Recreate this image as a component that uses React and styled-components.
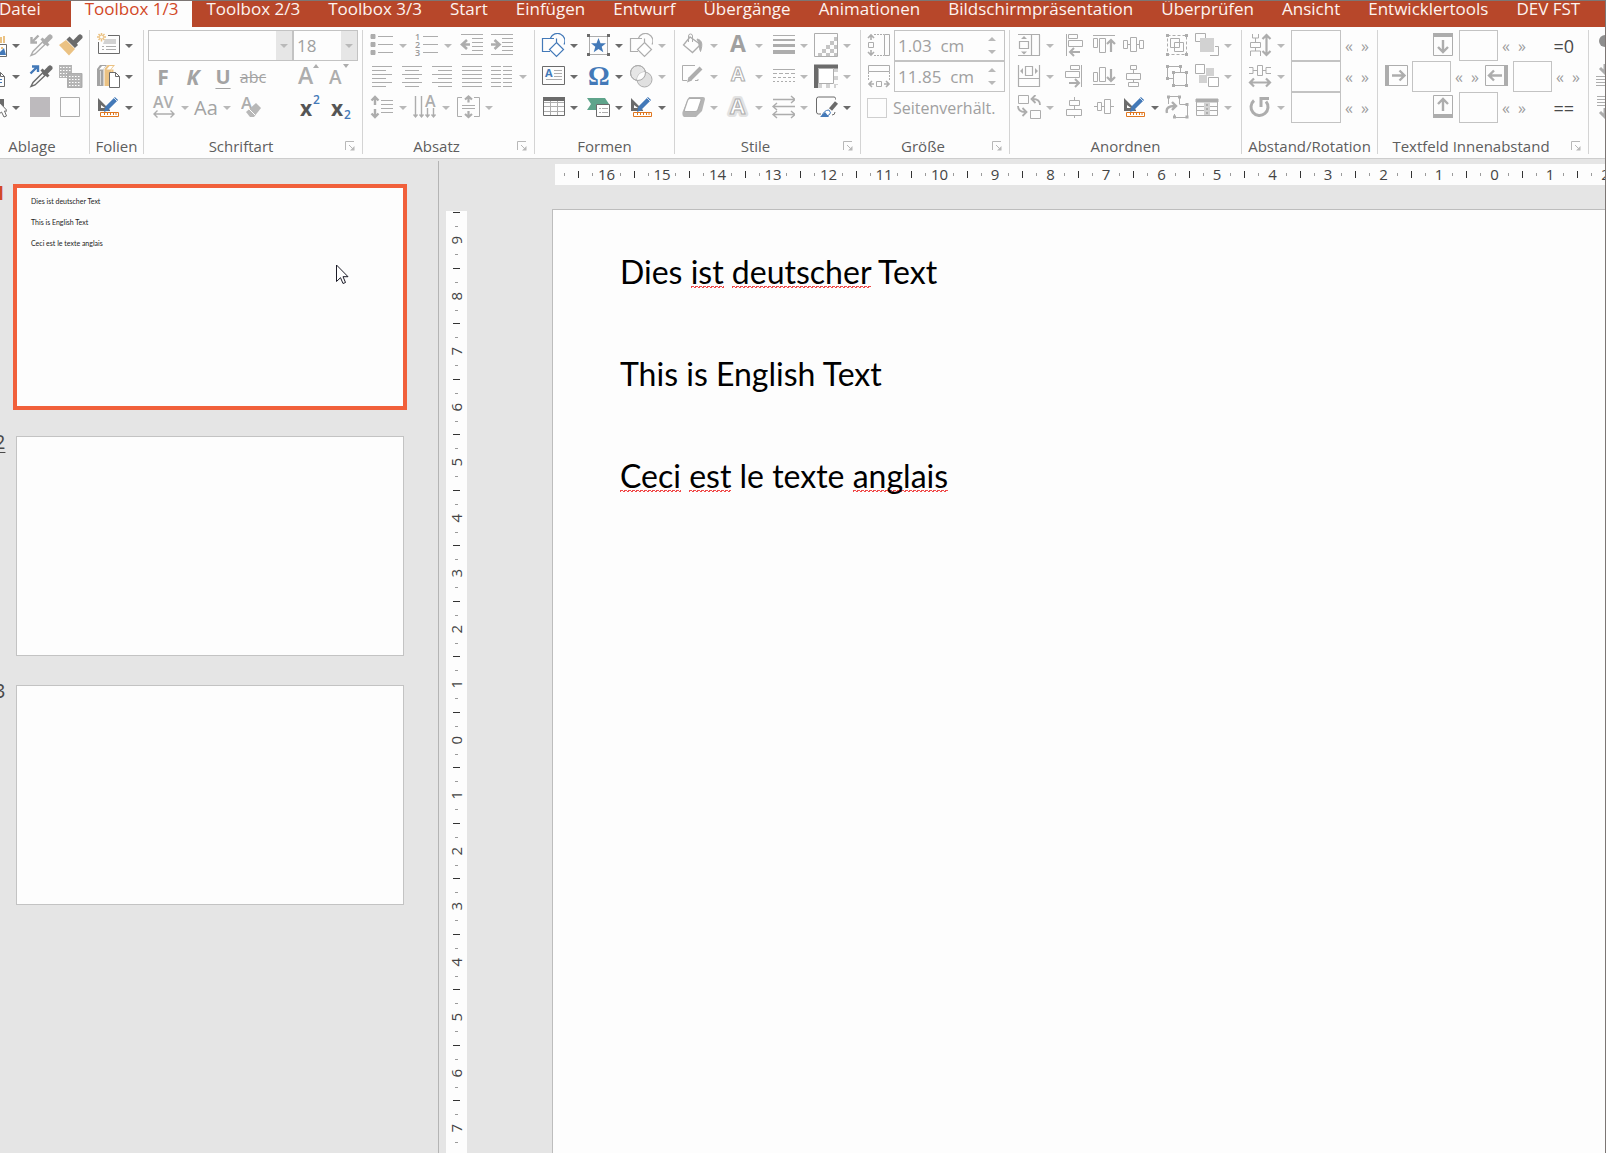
import React from "react";
import styled, { createGlobalStyle, css } from "styled-components";

const G = "#adadad";
const L = "#d2d2d2";
const D = "#6b6b6b";
const B = "#4379b8";
const O = "#e0771f";
const T = "#ebc283";
const UI = '"Open Sans", "Noto Sans", sans-serif';

const GlobalStyle = createGlobalStyle`
  *, *::before, *::after { box-sizing: border-box; }
  body { margin: 0; background: #e5e5e5; font-family: ${UI}; }
  button, input, select { font: inherit; margin: 0; }
  h1, h2, p, ol { margin: 0; padding: 0; font-weight: 400; }
`;

const Frame = styled.div`
  display: flex;
  flex-direction: column;
  height: 100vh;
  overflow: hidden;
  border-top: 1px solid #7c7674;
  border-right: 1px solid #7c7674;
  background: #e5e5e5;
`;

/* ---------- tabs ---------- */

const TabBar = styled.nav`
  display: flex;
  flex: none;
  height: 26px;
  overflow: hidden;
  background: #b7472a;
`;

const Tab = styled.a`
  flex: none;
  padding: 0 14px;
  line-height: 16px;
  font-size: 17px;
  white-space: nowrap;
  text-decoration: none;
  color: ${(p) => (p.$active ? "#d24726" : "#fdf3f0")};
  background: ${(p) => (p.$active ? "#fdfdfd" : "transparent")};
  &:first-child {
    margin-left: -15px;
    padding-right: 30px;
  }
`;

/* ---------- ribbon ---------- */

const Ribbon = styled.div`
  display: flex;
  flex: none;
  height: 132px;
  padding-top: 3px;
  overflow: hidden;
  background: #fdfdfd;
  border-bottom: 1px solid #cdcdcd;
`;

const Group = styled.section`
  display: flex;
  flex-direction: column;
  flex: none;
  width: ${(p) => p.$width}px;
  height: 124px;
  padding-left: ${(p) => p.$inset || 6}px;
  border-right: 1px solid #d4d4d4;
  &:first-child {
    margin-left: -27px;
  }
`;

const Row = styled.div`
  display: grid;
  grid-template-columns: ${(p) => p.$cols};
  align-items: center;
  height: 31px;
  margin-left: ${(p) => p.$indent || 0}px;
`;

const GroupFooter = styled.footer`
  display: flex;
  align-items: center;
  height: 16px;
  margin-top: 15px;
  margin-left: -${(p) => p.$inset || 6}px;
`;

const GroupTitle = styled.h2`
  flex: 1;
  text-align: center;
  white-space: nowrap;
  font-size: 15px;
  line-height: 16px;
  color: #5e5e5e;
`;

const Launcher = styled.button`
  width: 24px;
  height: 10px;
  padding: 0 0 0 7px;
  border: 0;
  background: none;
  display: flex;
`;

const ToolButton = styled.button`
  display: flex;
  align-items: center;
  gap: 5px;
  height: 31px;
  padding: 0;
  border: 0;
  background: none;
  color: ${G};
`;

const Glyph = styled.span`
  width: ${(p) => p.$width || 30}px;
  text-align: center;
  font-size: ${(p) => p.$size || 21}px;
  line-height: 24px;
  font-weight: ${(p) => (p.$bold ? 700 : 400)};
  font-style: ${(p) => (p.$italic ? "italic" : "normal")};
  text-decoration: ${(p) => p.$line || "none"};
  text-decoration-thickness: 1px;
  text-underline-offset: 4px;
  color: ${(p) => p.$color || "#a3a3a3"};
`;

const Script = styled.span`
  align-self: ${(p) => (p.$low ? "flex-end" : "flex-start")};
  font-size: 12px;
  line-height: 16px;
  font-weight: 600;
  color: ${B};
`;

const ScriptButton = styled(ToolButton)`
  gap: 1px;
`;

const Combo = styled.div`
  display: grid;
  grid-template-columns: 1fr 16px;
  height: 31px;
  border: 1px solid #c3c3c3;
  select {
    grid-area: 1 / 1 / 2 / 3;
    width: 100%;
    height: 29px;
    padding: 0 3px;
    appearance: none;
    border: 0;
    border-radius: 0;
    background: #fdfdfd;
    font-size: 17px;
    color: #a0a0a0;
    opacity: 1;
  }
  span {
    grid-area: 1 / 2;
    z-index: 1;
    display: grid;
    place-items: center;
    background: #e6e6e6;
  }
`;

const Field = styled.input`
  width: 100%;
  min-width: 0;
  height: 31px;
  padding: 0 4px;
  border: 1px solid #c3c3c3;
  background: #fdfdfd;
  font-size: 17px;
  color: #a0a0a0;
`;

const SpinBox = styled.div`
  display: flex;
  align-items: center;
  height: 31px;
  border: 1px solid #c3c3c3;
  input {
    flex: 1;
    min-width: 0;
    padding: 0 0 0 3px;
    border: 0;
    background: none;
    font-size: 17px;
    color: #a0a0a0;
    white-space: pre;
  }
`;

const SpinButtons = styled.div`
  display: flex;
  flex-direction: column;
  width: 24px;
  button {
    display: grid;
    place-items: center;
    height: 13px;
    padding: 0;
    border: 0;
    background: none;
  }
`;

const CheckLabel = styled.label`
  display: flex;
  align-items: center;
  gap: 6px;
  font-size: 16px;
  white-space: nowrap;
  color: #a0a0a0;
  input {
    width: 20px;
    height: 20px;
    margin: 0;
    appearance: none;
    border: 1px solid #cfcfcf;
  }
`;

const Step = styled.button`
  width: 16px;
  padding: 0;
  border: 0;
  background: none;
  font-size: 16px;
  line-height: 24px;
  color: #9d9d9d;
`;

const Preset = styled.button`
  padding: 0;
  border: 0;
  background: none;
  font-size: 18px;
  line-height: 24px;
  text-align: right;
  color: #4a4a4a;
`;

/* ---------- workspace ---------- */

const Workspace = styled.div`
  display: flex;
  flex: 1;
  min-height: 0;
  padding-top: 2px;
`;

const Sidebar = styled.aside`
  flex: none;
  width: 439px;
  overflow: hidden;
  padding: 26px 34px 0 0;
  border-right: 1px solid #b4b4b4;
`;

const SlideList = styled.ol`
  display: flex;
  flex-direction: column;
  gap: 29px;
  margin-left: -6px;
  list-style: none;
`;

const SlideItem = styled.li`
  display: flex;
  gap: 11px;
`;

const SlideNumber = styled.span`
  width: 11px;
  margin-top: -2px;
  font-size: 20px;
  line-height: 15px;
  color: ${(p) => (p.$active ? "#d24726" : "#4a4a4a")};
  font-weight: ${(p) => (p.$active ? 700 : 400)};
  text-decoration: ${(p) => (p.$animated ? "underline" : "none")};
  text-decoration-thickness: 1px;
  text-underline-offset: 3px;
`;

const Thumb = styled.div`
  position: relative;
  flex: 1;
  height: 220px;
  padding: 3px 14px;
  border: 1px solid #c3c3c3;
  background: #fdfdfd;
  font-family: Lato, sans-serif;
  font-size: 7px;
  line-height: 21px;
  color: #222;
  ${(p) =>
    p.$active &&
    css`
      border-color: #f1603b;
      box-shadow: 0 0 0 3px #f1603b;
    `}
`;

const Pointer = styled.svg`
  position: absolute;
  left: 319px;
  top: 76px;
`;

const Pane = styled.main`
  flex: 1;
  min-width: 0;
  display: grid;
  grid-template-columns: 21px 1fr;
  grid-template-rows: 21px 1fr;
  gap: 24px 85px;
  padding: 3px 0 0 7px;
  overflow: hidden;
`;

const RulerH = styled.div`
  grid-column: 2;
  display: flex;
  margin-left: 3px;
  padding-left: 3px;
  overflow: hidden;
  background: #fdfdfd;
`;

const RulerV = styled.div`
  display: flex;
  flex-direction: column;
  justify-content: flex-start;
  min-height: 0;
  margin-top: 2px;
  overflow: hidden;
  background: #fdfdfd;
  & > :first-child {
    margin-top: -5px;
  }
`;

/* Two centimetres of ruler, eight equal slots */
const Span = styled.div`
  flex: none;
  display: flex;
  flex-direction: ${(p) => (p.$vertical ? "column" : "row")};
  ${(p) => (p.$vertical ? "height" : "width")}: 111px;
`;

const Slot = styled.span`
  flex: 1 1 0;
  min-width: 0;
  min-height: 0;
  display: flex;
  align-items: center;
  justify-content: center;
  font-size: 15px;
  line-height: 20px;
  color: #444;
  b {
    font-weight: 400;
    writing-mode: ${(p) => (p.$vertical ? "vertical-rl" : "horizontal-tb")};
    rotate: ${(p) => (p.$vertical ? "180deg" : "none")};
    margin: ${(p) => (p.$vertical ? "0 2px 0 0" : "0 0 2px")};
  }
`;

const Tick = styled.i`
  flex: none;
  ${(p) => {
    const size = p.$major ? 7 : 3;
    return p.$vertical
      ? `width: ${size}px; height: 1px;`
      : `width: 1px; height: ${size}px;`;
  }}
  background: ${(p) => (p.$major ? "#333" : "#9b9b9b")};
`;

const Slide = styled.article`
  grid-area: 2 / 2;
  display: flex;
  flex-direction: column;
  gap: 51px;
  padding: 36px 0 0 67px;
  border: solid #bdbdbd;
  border-width: 1px 0 0 1px;
  background: #fdfdfd;
  font-family: Lato, sans-serif;
  font-size: 32px;
  line-height: 51px;
  color: #000;
`;

const Misspelled = styled.span`
  padding-bottom: 1px;
  background-image: linear-gradient(45deg, transparent 60%, #f04a4a 60% 85%, transparent 85%),
    linear-gradient(135deg, transparent 10%, #f04a4a 10% 35%, transparent 35%);
  background-size: 4px 3px;
  background-repeat: repeat-x;
  background-position: 0 34px;
`;

/* ---------- icons ---------- */

const Svg = ({ children, c = G, fill = "none", ...rest }) => (
  <svg width="24" height="25" viewBox="0 0 24 25" fill={fill} stroke={c} aria-hidden="true" {...rest}>
    {children}
  </svg>
);

const Caret = ({ on, up }) => (
  <svg width="8" height="4" viewBox="0 0 8 4" aria-hidden="true">
    <path d={up ? "M0 4h8L4 0z" : "M0 0h8L4 4z"} fill={on ? D : "#b9b9b9"} />
  </svg>
);

const ArrowHead = ({ d, c = G }) => <path d={d} fill="none" stroke={c} strokeWidth="2.4" />;

const Rules = ({ ys, x1, x2 }) => <path d={ys.map((y) => `M${x1} ${y}H${x2}`).join("")} />;

const Pipette = ({ c }) => (
  <>
    <path d="M14 8.500 4 18.500l-2 4 4-1.500L16.500 11" stroke={c} strokeWidth="1.400" />
    <path d="M12.500 5.500l7 7" stroke={c} strokeWidth="3" />
    <path d="M16 9l5-5" stroke={c} strokeWidth="5" strokeLinecap="round" />
  </>
);

const Shapes = ({ c, fill = "none" }) => (
  <Svg c={c} strokeWidth="1.200">
    <path d="M9 18.500H1.500v-13H13" />
    <path d="M9.500 5A7.500 7.500 0 1 1 23 11.500M15.500 5.500V9" />
    <path d="M15.500 9.500l7 7-7 7-7-7z" fill={fill} />
  </Svg>
);

const Lines = ({ rows }) => (
  <Svg shapeRendering="crispEdges">
    {rows.map(([a, b], i) => (
      <path key={i} d={`M${a} ${2.5 + i * 4}H${b}`} strokeWidth="1" />
    ))}
  </Svg>
);

const Handles = ({ pts, c = G }) => (
  <path d={pts.map(([x, y]) => `M${x - 1.5} ${y - 1.5}h3v3h-3z`).join("")} fill={c} stroke="none" />
);

const I = {
  paste: (
    <Svg>
      <path d="M2 4h4v18H2zM17 4h2v6h-2zM20 3h2v7h-2z" fill={T} stroke="none" />
      <path d="M8.500 11.500h15v12h-15z" fill="#fff" stroke={D} />
      <path d="M10 22l5-5 2 2 4-4 2 7z" fill={B} stroke="none" />
      <path d="M18 14h2v2h-2z" fill={T} stroke="none" />
    </Svg>
  ),
  page: (
    <Svg c={D}>
      <path d="M8 8.500h9.500l4 4v10H8M17.500 8.500v4h4" />
      <path d="M10 15.500h9M10 18.500h9" stroke={B} />
    </Svg>
  ),
  select: (
    <Svg c={D}>
      <path d="M10 4h11v8z" fill={D} stroke="none" />
      <path d="M15.500 6.500v13l3-2.500 2.500 5 2.500-1-2-5h3z" fill="#fff" />
    </Svg>
  ),
  pipetteOff: (
    <Svg>
      <Pipette c={G} />
      <path d="M9.500 2.500l-7 7M2.500 4v5.500H8" strokeWidth="2.400" />
    </Svg>
  ),
  pipette: (
    <Svg>
      <Pipette c={D} />
      <path d="M1.500 9.500l6.500-6.500M3 2.500h6V8" stroke={B} strokeWidth="2.400" />
    </Svg>
  ),
  brush: (
    <Svg>
      <path d="M16 9l5-5" stroke={D} strokeWidth="5" strokeLinecap="round" />
      <path d="M9 5l8.500 8.500" stroke={D} strokeWidth="4.500" />
      <path d="M7 7l9 9-6 6.500L0 12z" fill={T} stroke="none" />
    </Svg>
  ),
  hatch: (
    <Svg>
      <path d="M0 1h13v13H0z" fill="#b5b5b5" stroke="none" />
      <path d="M1 3.500h12M1 6.500h12M1 9.500h12M1 12.500h12" stroke="#fff" strokeDasharray="1.500 1.500" />
      <path d="M8.500 9.500h14v14h-14z" fill="#b5b5b5" />
      <path d="M10 12.500h12M10 15.500h12M10 18.500h12M10 21.500h12" stroke="#fff" strokeDasharray="1.500 1.500" />
      <path d="M9 9.500h14v14h-14z" />
    </Svg>
  ),
  solid: (
    <Svg>
      <path d="M1 2h20v20H1z" fill="#bdbabd" stroke="none" />
    </Svg>
  ),
  hollow: (
    <Svg>
      <path d="M1.500 2.500h19v19h-19z" />
    </Svg>
  ),
  newSlide: (
    <Svg c={D}>
      <path d="M12 2.500h11.500v18h-21V9" />
      <path d="M9 6h11v5H7z" fill={L} stroke="none" />
      <path d="M6 13.500h2m2 0h10M6 16.500h2m2 0h10" stroke={G} />
      <path d="M5.500-.5v9M1 4h9M2.500 1l6 6M8.500 1l-6 6" stroke={T} strokeWidth="1.500" />
      <circle cx="5.500" cy="4" r="1.500" fill="#fff" stroke="none" />
    </Svg>
  ),
  books: (
    <Svg>
      <path d="M1 5l3-4h7L7.500 5v17H1z" fill="#a3a3a3" stroke="none" />
      <path d="M8.500 5l3-4H19l-3.500 4v17h-7z" fill={T} stroke="none" />
      <path d="M3 5.500h4L9.500 2H6zM10.500 5.500h4L17 2h-3.500z" fill="#fff" stroke="none" />
      <path d="M4.500 7v14" stroke="#d8d8d8" />
      <path d="M16.500 5.500v4" stroke={T} strokeWidth="2" />
      <path d="M13.500 8.500h6l4 4v11h-10z" fill="#fff" stroke={D} />
      <path d="M19.500 8.500v4h4" stroke={D} />
    </Svg>
  ),
  design: (
    <Svg>
      <path d="M2 3l12 12v1H2zM5 10v3h4z" fill={D} fillRule="evenodd" stroke="none" />
      <path d="M20.500 3.500L11 13" stroke={B} strokeWidth="4.500" />
      <path d="M18 3l4 4" stroke="#fff" strokeWidth=".8" />
      <path d="M9.500 11.500l3.500 3.500-5 2z" fill={B} stroke="none" />
      <path d="M4.500 17.500h18v4h-18z" fill="#fff" stroke={O} />
      <path d="M8.500 18v2M11.500 18v2M14.500 18v2M17.500 18v2M20 18v2" stroke={O} />
    </Svg>
  ),
  grow: (
    <Svg fill={G} stroke="none">
      <text x="1" y="20" fontSize="23" fontWeight="600" fontFamily={UI}>A</text>
      <path d="M16 4h6l-3-4z" />
    </Svg>
  ),
  shrink: (
    <Svg fill={G} stroke="none">
      <text x="1" y="20" fontSize="19" fontWeight="600" fontFamily={UI}>A</text>
      <path d="M15 0h6l-3 4z" />
    </Svg>
  ),
  spacing: (
    <Svg fill={G} stroke="none">
      <text x="1" y="13" fontSize="16" fontWeight="600" fontFamily={UI}>AV</text>
      <path d="M2 19h20M5.500 15.500L2 19l3.500 3.500M18.500 15.500L22 19l-3.500 3.500" fill="none" stroke={G} strokeWidth="1.400" />
    </Svg>
  ),
  clear: (
    <Svg fill={G} stroke="none">
      <text x="0" y="14" fontSize="17" fontWeight="600" fontFamily={UI}>A</text>
      <path d="M15 8l5 5-7 9H9l-4-5z" fill="#b8b8b8" />
      <path d="M8 14l6 6" stroke="#fff" />
    </Svg>
  ),
  bullets: (
    <Svg>
      <path d="M8 3.500h15M8 11.500h15M8 19.500h15" />
      <path d="M1 1.500h4v4H1zM1 9.500h4v4H1zM1 17.500h4v4H1z" fill={G} stroke={G} strokeWidth="1" strokeLinejoin="round" />
    </Svg>
  ),
  numbers: (
    <Svg>
      <path d="M8 3.500h15M8 11.500h15M8 19.500h15" />
      <g fill="#9a9a9a" stroke="none" fontSize="9" fontWeight="600" fontFamily={UI}>
        <text x="0" y="7">1</text>
        <text x="0" y="15">2</text>
        <text x="0" y="23">3</text>
      </g>
    </Svg>
  ),
  outdent: (
    <Svg>
      <path d="M1 1.500h22M12 5.500h11M12 9.500h11M12 13.500h11M12 17.500h11M1 21.500h22" />
      <path d="M2 11.500h8M7 7l-5 4.500L7 16" strokeWidth="2.600" />
    </Svg>
  ),
  indent: (
    <Svg>
      <path d="M1 1.500h22M12 5.500h11M12 9.500h11M12 13.500h11M12 17.500h11M1 21.500h22" />
      <path d="M1 11.500h8M4.500 7l5 4.500-5 4.500" strokeWidth="2.600" />
    </Svg>
  ),
  left: <Lines rows={[[2, 22], [2, 16], [2, 22], [2, 16], [2, 22], [2, 16]]} />,
  center: <Lines rows={[[2, 22], [5, 19], [2, 22], [5, 19], [2, 22], [5, 19]]} />,
  right: <Lines rows={[[2, 22], [8, 22], [2, 22], [8, 22], [2, 22], [8, 22]]} />,
  justify: <Lines rows={[[2, 22], [2, 22], [2, 22], [2, 22], [2, 22], [2, 22]]} />,
  columns: (
    <Svg>
      {[2.5, 6.5, 10.5, 14.5, 18.5, 22.5].map((y) => (
        <path key={y} d={`M1 ${y}h10M13 ${y}h9`} />
      ))}
    </Svg>
  ),
  lineSpacing: (
    <Svg>
      <Rules ys={[5.5, 9.5, 13.5, 17.5]} x1={11} x2={23} />
      <path d="M5 2v8M5 14v8M1.500 5.500L5 2l3.500 3.500M1.500 18.500L5 22l3.500-3.500" strokeWidth="2.400" />
    </Svg>
  ),
  direction: (
    <Svg>
      <path d="M2.500 1v21M8.500 1v21M14.500 13v9M20.500 13v9M.5 19.500l2 2.500 2-2.500M6.500 19.500l2 2.500 2-2.500M12.500 19.500l2 2.500 2-2.500M18.500 19.500l2 2.500 2-2.500" strokeWidth="1.400" />
      <text x="12" y="12" fontSize="16" fontWeight="600" fill={G} stroke="none" fontFamily={UI}>A</text>
    </Svg>
  ),
  textAlign: (
    <Svg>
      <path d="M6 2.500H1.500v19H6M18 2.500h5.500v19H18M6 10.500h13M6 13.500h13" />
      <path d="M12.500 1.500v6M12.500 16v6M9 4.500l3.500-3 3.500 3M9 19l3.500 3 3.500-3" strokeWidth="2.200" />
    </Svg>
  ),
  shapes: <Shapes c={B} fill="#fff" />,
  shapesOff: <Shapes c={G} fill="#fff" />,
  star: (
    <Svg>
      <path d="M3.500 3.500h18v18h-18z" stroke={G} />
      <Handles c={D} pts={[[2.500, 2.500], [22.500, 2.500], [2.500, 21.500], [22.500, 21.500]]} />
      <path d="M12.500 5l2 5.200h5.500l-4.300 3.500 1.600 5.600-4.800-3.300-4.800 3.300 1.600-5.600L5 10.200h5.500z" fill={B} stroke="none" />
    </Svg>
  ),
  textBox: (
    <Svg c={D}>
      <path d="M1.500 2.500h22v18h-22z" />
      <path d="M13 6.500h8M13 9.500h8M13 12.500h8M5 15.500h16" stroke={G} />
      <text x="4" y="13" fontSize="11" fontWeight="700" fill={B} stroke="none" fontFamily={UI}>A</text>
    </Svg>
  ),
  omega: (
    <Svg fill={B} stroke="none">
      <text x="2" y="21" fontSize="27" fontWeight="700" fontFamily='"Liberation Serif", serif'>Ω</text>
    </Svg>
  ),
  merge: (
    <Svg>
      <circle cx="9" cy="9" r="7.500" fill="#e6e6e6" />
      <circle cx="15.500" cy="15.500" r="7.500" fill="#e0e0e0" />
      <path d="M8 16a7.500 7.500 0 0 1 8-8 7.500 7.500 0 0 1-8 8z" fill="#fdfdfd" stroke="none" />
      <circle cx="9" cy="9" r="7.500" />
    </Svg>
  ),
  table: (
    <Svg c={D}>
      <path d="M2.500 7.500h21M2.500 11.500h21M2.500 16.500h21M9.500 6v14M16.500 6v14" stroke={G} />
      <path d="M2.500 2.500h21v18h-21z" />
      <path d="M2 2h22v4H2z" fill={D} stroke="none" />
    </Svg>
  ),
  agenda: (
    <Svg>
      <path d="M1 3h18l4 6-4 6H1l4-6z" fill="#5fa48b" stroke="none" />
      <path d="M10.500 9.500h13v12h-13z" fill="#fff" stroke={D} />
      <path d="M13 13.500h2m1 0h6M13 17.500h2m1 0h6" />
    </Svg>
  ),
  fill: (
    <Svg>
      <path d="M9 4L2.500 12l9 7.500 8-8z" strokeWidth="1.300" />
      <path d="M7.500 9V3q0-2 2-2t2 2v6" />
      <path d="M16 6c5 1 6 5 3.500 12.500-2-4-.5-8-3.500-12.500z" fill={G} />
    </Svg>
  ),
  fontFill: (
    <Svg fill="#a0a0a0" stroke="none">
      <text x="4" y="19" fontSize="23" fontWeight="700" fontFamily={UI}>A</text>
    </Svg>
  ),
  weights: (
    <Svg>
      <path d="M2 2.500h22" />
      <path d="M2 7h22" strokeWidth="2" />
      <path d="M2 12.500h22" strokeWidth="3" />
      <path d="M2 19h22" strokeWidth="4" />
    </Svg>
  ),
  transparency: (
    <Svg>
      <path d="M4 20h4v3H4zM8 16h4v4H8zM12 12h4v4h-4zM16 8h4v4h-4zM20 4h3v4h-3zM12 20h4v3h-4zM16 16h4v4h-4zM20 12h3v4h-3zM20 20h3v3h-3z" fill="#c4c4c4" stroke="none" />
      <path d="M.5.500h23v23H.5z" />
    </Svg>
  ),
  outline: (
    <Svg>
      <path d="M14 1.500H1.500v15H6M17 15v1.500h-3" />
      <path d="M9 15L20 4" strokeWidth="4" />
      <path d="M7.500 13l3.500 3.500-5 2z" fill={G} stroke="none" />
    </Svg>
  ),
  fontOutline: (
    <Svg>
      <text x="5" y="17" fontSize="20" fontWeight="700" fontFamily={UI}>A</text>
    </Svg>
  ),
  dashes: (
    <Svg>
      <path d="M2 5.500h22" />
      <path d="M2 9.500h22" strokeDasharray="4 2" />
      <path d="M2 13.500h22" strokeDasharray="3 2" />
      <path d="M2 17.500h22" strokeDasharray="2 2" />
    </Svg>
  ),
  frame: (
    <Svg>
      <path d="M22 4v17M4 22h18" stroke={L} strokeWidth="4" strokeDasharray="4 4" />
      <path d="M2 24V2.500H24" stroke={D} strokeWidth="4" />
      <path d="M4.500 4.500h15v15h-15z" fill="#fff" />
    </Svg>
  ),
  bevel: (
    <Svg>
      <path d="M8 2h14q2 0 2 2l-3 12-6 6H3q-2-1-1.500-5z" fill="#b5b5b5" stroke="none" />
      <path d="M9 3.500h9.500q2 0 1.500 2l-3 9q-.5 2-2.500 2H5q-2 0-1.500-2l3-9q.5-2 2.500-2z" fill="#fff" strokeWidth="1.200" />
    </Svg>
  ),
  glow: (
    <Svg fill="#fff">
      <g fontSize="22" fontWeight="700" fontFamily={UI}>
        <text x="4" y="19" stroke="#e2e2e2" strokeWidth="6" strokeLinejoin="round">A</text>
        <text x="4" y="19">A</text>
      </g>
    </Svg>
  ),
  arrows: (
    <Svg strokeWidth="1.400">
      <path d="M2 4.500h22M20 1l4 3.500L20 8M24 11.500H2M6 8l-4 3.500L6 15M2 19.500h22M6 16l-4 3.500L6 23M20 16l4 3.500L20 23" />
    </Svg>
  ),
  style: (
    <Svg c={D}>
      <path d="M21.500 4.500v-1q0-1.500-1.500-1.500H4.500Q2.500 2 2.500 4v13q0 2 2 2H7M18 20q3 0 3-3" />
      <path d="M22.500 7.500l-6 7" strokeWidth="4" />
      <path d="M8 21q2-6 7-6 3 3 0 5-3 2.500-7 1z" fill="#fff" stroke={B} />
      <path d="M6 22l5-5 4 5z" fill={B} stroke="none" />
    </Svg>
  ),
  height: (
    <Svg>
      <path d="M17.500 1.500h5v21h-5z" />
      <path d="M7 1.500h10M7 22.500h10" strokeDasharray="2 1" />
      <path d="M1.500 9.500h5v5h-5z" />
      <path d="M4 2v5M1 5l3-3 3 3M4 17v5M1 19l3 3 3-3" strokeWidth="1.600" />
    </Svg>
  ),
  width: (
    <Svg>
      <path d="M1.500 1.500h21v6h-21z" />
      <path d="M1.500 8v9M22.500 8v9" strokeDasharray="2 1" />
      <path d="M9.500 17.500h5v5h-5z" />
      <path d="M2 20h5M5 17l-3 3 3 3M17 20h5M19 17l3 3-3 3" strokeWidth="1.600" />
    </Svg>
  ),
  sameHeight: (
    <Svg>
      <path d="M1 1.500h22M1 22.500h22M14.500 2v20M22.500 2v20M2.500 8.500h9v7h-9z" strokeWidth="1.200" />
      <path d="M4 6h6L7 3zM4 18.500h6l-3 3z" fill={G} stroke="none" />
    </Svg>
  ),
  sameWidth: (
    <Svg>
      <path d="M1.500 1v22M22.500 1v22M2 14.500h20M2 22.500h20M8.500 2.500h7v9h-7z" strokeWidth="1.200" />
      <path d="M6 4v6L3 7zM18 4v6l3-3z" fill={G} stroke="none" />
    </Svg>
  ),
  swap: (
    <Svg>
      <path d="M1.500.500h10v8h-10zM13.500 15.500h10v8h-10z" />
      <path d="M23 10q0-6-7-6M18.500 0L14.500 4l4 4M1 11q0 6 7 6M5.500 13l4 4-4 4" strokeWidth="1.800" />
    </Svg>
  ),
  alignLeft: (
    <Svg>
      <path d="M1.500 1v22M3.500 1.500h9v4h-9zM3.500 7.500h14v6h-14z" />
      <path d="M5 19h10M9 15l-4 4 4 4" strokeWidth="2" />
    </Svg>
  ),
  alignTop: (
    <Svg>
      <path d="M0 2.500h22M.5 5.500h4v9h-4zM6.500 5.500h6v14h-6z" />
      <path d="M18 19V7M14 11l4-4 4 4" strokeWidth="2.200" />
    </Svg>
  ),
  middle: (
    <Svg>
      <path d="M1.500 7.500h4v8h-4zM8.500 4.500h6v14h-6zM17.500 7.500h4v8h-4zM5 11.500h3M15 11.500h2" />
    </Svg>
  ),
  group: (
    <Svg>
      <path d="M2.500 2.500h19v19h-19z" strokeDasharray="3 2" />
      <path d="M5.500 5.500h9v9h-9zM9.500 9.500h9v9h-9z" />
      <Handles pts={[[2.500, 2.500], [21.500, 2.500], [2.500, 21.500], [21.500, 21.500]]} />
    </Svg>
  ),
  forward: (
    <Svg>
      <path d="M9 8.500H.5v-8h10V5M15 22.500h8.500v-9H20" />
      <path d="M5 5h14v14H5z" fill={L} stroke="none" />
    </Svg>
  ),
  alignRight: (
    <Svg>
      <path d="M16.500 1v22M5.500 1.500h9v4h-9zM.5 7.500h14v6H.5z" />
      <path d="M4 19h10M10 15l4 4-4 4" strokeWidth="2" />
    </Svg>
  ),
  alignBottom: (
    <Svg>
      <path d="M0 20.500h22M.5 8.500h4v9h-4zM6.500 3.500h6v14h-6z" />
      <path d="M18 5v12M14 13l4 4 4-4" strokeWidth="2.200" />
    </Svg>
  ),
  centre: (
    <Svg>
      <path d="M8.500 1.500h6v4h-6zM4.500 9.500h14v6h-14zM6.500 18.500h10v4h-10zM11.500 6v3M11.500 16v2" />
    </Svg>
  ),
  ungroup: (
    <Svg>
      <path d="M8 14.500H2.500v-12h13V8M8.500 8.500h13v13h-13z" />
      <Handles pts={[[2.500, 2.500], [15.500, 2.500], [2.500, 14.500], [8.500, 8.500], [21.500, 8.500], [8.500, 21.500], [21.500, 21.500]]} />
    </Svg>
  ),
  backward: (
    <Svg>
      <path d="M11 4h8v8h-8zM4 11h8v8H4z" fill={L} stroke="none" />
      <path d="M.5.500h9v9h-9zM13.500 13.500h10v9h-10z" fill="#fff" />
    </Svg>
  ),
  centerH: (
    <Svg>
      <path d="M9.500 2v3M4.500 5.500h10v5h-10zM1.500 14.500h15v6h-15zM9.500 11v3M9.500 21v2" />
    </Svg>
  ),
  centerV: (
    <Svg>
      <path d="M1 11.500h3M4.500 7.500h4v8h-4zM11.500 4.500h6v14h-6zM9 11.500h2M18 11.500h3" />
    </Svg>
  ),
  regroup: (
    <Svg>
      <path d="M3.500 9V1.500h11v8M20 9.500h2.500v13h-13V19M15 9.500h7" />
      <Handles pts={[[3.500, 2], [14.500, 2], [22, 9.500], [22, 22], [9.500, 22]]} />
      <path d="M2 18q-2-7 8-7M7 7l4 4-4 4" strokeWidth="2.400" />
    </Svg>
  ),
  grid: (
    <Svg>
      <path d="M1 4h22v3H1z" fill={G} />
      <path d="M1.500 4.500h21v16h-21zM1 11.500h22M1 15.500h22" />
      <path d="M9 7h6v13H9z" fill={L} stroke="none" />
      <path d="M11 9h2v2h-2zM11 13h2v2h-2zM11 17h2v2h-2z" fill={G} stroke="none" />
    </Svg>
  ),
  gapV: (
    <Svg>
      <path d="M4.500 1v4h6V1M7.500 5v4M2.500 9.500h10v5h-10zM7.500 15v3M2.500 23v-5h10v5" />
      <path d="M18.500 2v20M14.500 6l4-4 4 4M14.500 18l4 4 4-4" strokeWidth="2.200" />
    </Svg>
  ),
  gapH: (
    <Svg>
      <path d="M1 3.500h4v6H1M5 6.500h4M9.500 1.500h5v10h-5zM15 6.500h3M23 3.500h-5v6h5" />
      <path d="M2 18.500h20M6 14.500l-4 4 4 4M18 14.500l4 4-4 4" strokeWidth="2.200" />
    </Svg>
  ),
  rotate: (
    <Svg>
      <path d="M6 5.500a8.500 8.500 0 1 0 12 1" strokeWidth="3" />
      <path d="M11.500 2H21v3h-6.500v7h-3z" fill={G} stroke="none" />
    </Svg>
  ),
  insetTop: (
    <Svg>
      <path d="M2.500.500h19v22h-19z" />
      <path d="M2 0h20v4H2z" fill={G} stroke="none" />
      <ArrowHead d="M12 7v12M7 14l5 5 5-5" />
    </Svg>
  ),
  insetBottom: (
    <Svg>
      <path d="M2.500.500h19v22h-19z" />
      <path d="M2 19h20v4H2z" fill={G} stroke="none" />
      <ArrowHead d="M12 16V4M7 9l5-5 5 5" />
    </Svg>
  ),
  insetLeft: (
    <Svg>
      <path d="M1.500 1.500h22v20h-22z" />
      <path d="M1 1h4v21H1z" fill={G} stroke="none" />
      <ArrowHead d="M8 11.500h12M15.500 6.500l5 5-5 5" />
    </Svg>
  ),
  insetRight: (
    <Svg>
      <path d="M.5 1.500h22v20H.5z" />
      <path d="M19 1h4v21h-4z" fill={G} stroke="none" />
      <ArrowHead d="M17 11.500H4M9 6.500l-5 5 5 5" />
    </Svg>
  ),
  dot: (
    <Svg>
      <circle cx="10" cy="8" r="6" fill="#8e8e8e" stroke="none" />
    </Svg>
  ),
  paraTop: (
    <Svg>
      <Rules ys={[12.5, 15.500, 18.500, 21.500]} x1={1} x2={20} />
      <path d="M10 0v8M5 4l5 5 5-5" strokeWidth="3" />
    </Svg>
  ),
  paraBottom: (
    <Svg>
      <Rules ys={[1.500, 4.500, 7.500, 10.500]} x1={2} x2={20} />
      <path d="M10 13v8M5 17l5 5 5-5" strokeWidth="3" />
    </Svg>
  ),
};

/* ---------- building blocks ---------- */

const Tool = ({ icon, label, menu, on }) => (
  <ToolButton type="button" aria-label={label || icon}>
    {I[icon]}
    {menu && <Caret on={on} />}
  </ToolButton>
);

const Menu = (props) => <Tool menu {...props} />;

const Footer = ({ title, launcher, inset }) => (
  <GroupFooter $inset={inset}>
    <GroupTitle>{title}</GroupTitle>
    {launcher && (
      <Launcher type="button" aria-label={`${title} öffnen`}>
        <svg width="10" height="10" viewBox="0 0 10 10" fill="none" stroke="#b8b8b8">
          <path d="M.5 9V.500H9M4 4l4 4" />
          <path d="M9.500 5v4.500H5z" fill="#b8b8b8" stroke="none" />
        </svg>
      </Launcher>
    )}
  </GroupFooter>
);

const Select = ({ label, value }) => (
  <Combo>
    <select aria-label={label} defaultValue={value} disabled>
      <option value={value}>{value}</option>
    </select>
    <span>
      <Caret />
    </span>
  </Combo>
);

const Spinner = ({ label, value }) => (
  <SpinBox>
    <input aria-label={label} defaultValue={value} />
    <SpinButtons>
      <button type="button" aria-label={`${label} größer`}><Caret up /></button>
      <button type="button" aria-label={`${label} kleiner`}><Caret /></button>
    </SpinButtons>
  </SpinBox>
);

const Steps = ({ label }) => (
  <>
    <Field aria-label={label} />
    <Step type="button" aria-label={`${label} verringern`}>«</Step>
    <Step type="button" aria-label={`${label} erhöhen`}>»</Step>
  </>
);

const Minor = ({ v }) => <Slot $vertical={v}><Tick $vertical={v} /></Slot>;
const Major = ({ v }) => <Slot $vertical={v}><Tick $vertical={v} $major /></Slot>;
const Mark = ({ v, n }) => <Slot $vertical={v}><b>{n}</b></Slot>;

const pairs = (from, count) =>
  Array.from({ length: count }, (_, i) => [Math.abs(from - 2 * i), Math.abs(from - 2 * i - 1)]);

const TABS = [
  "Datei", "Toolbox 1/3", "Toolbox 2/3", "Toolbox 3/3", "Start", "Einfügen", "Entwurf", "Übergänge",
  "Animationen", "Bildschirmpräsentation", "Überprüfen", "Ansicht", "Entwicklertools", "DEV FST",
];

const TEXTS = [
  [["Dies "], ["ist", 1], [" "], ["deutscher", 1], [" Text"]],
  [["This is English Text"]],
  [["Ceci", 1], [" "], ["est", 1], [" le texte "], ["anglais", 1]],
];

export default function App() {
  return (
    <Frame>
      <GlobalStyle />
      <TabBar>
        {TABS.map((t) => (
          <Tab key={t} href="#" $active={t === "Toolbox 1/3"}>{t}</Tab>
        ))}
      </TabBar>

      <Ribbon>
        <Group $width={117} $inset={10}>
          <Row $cols="46px 30px 30px">
            <Menu icon="paste" on /><Tool icon="pipetteOff" /><Tool icon="brush" />
          </Row>
          <Row $cols="46px 30px 30px">
            <Menu icon="page" on /><Tool icon="pipette" /><Tool icon="hatch" />
          </Row>
          <Row $cols="46px 30px 30px">
            <Menu icon="select" on /><Tool icon="solid" /><Tool icon="hollow" />
          </Row>
          <Footer title="Ablage" inset={8} />
        </Group>

        <Group $width={54}>
          <Row $cols="45px"><Menu icon="newSlide" on /></Row>
          <Row $cols="45px"><Menu icon="books" on /></Row>
          <Row $cols="45px"><Menu icon="design" on /></Row>
          <Footer title="Folien" />
        </Group>

        <Group $width={219} $inset={4}>
          <Row $cols="145px 65px">
            <Select label="Schriftart" value="" />
            <Select label="Schriftgrad" value="18" />
          </Row>
          <Row $cols="30px 30px 30px 59px 31px 30px">
            <ToolButton type="button"><Glyph $bold>F</Glyph></ToolButton>
            <ToolButton type="button"><Glyph $bold $italic>K</Glyph></ToolButton>
            <ToolButton type="button"><Glyph $bold $size={20} $line="underline">U</Glyph></ToolButton>
            <ToolButton type="button"><Glyph $size={16} $line="line-through">abc</Glyph></ToolButton>
            <Tool icon="grow" label="Schrift vergrößern" />
            <Tool icon="shrink" label="Schrift verkleinern" />
          </Row>
          <Row $cols="42px 47px 59px 31px 30px" $indent={4}>
            <Menu icon="spacing" />
            <ToolButton type="button"><Glyph $width={24} $size={20}>Aa</Glyph><Caret /></ToolButton>
            <Tool icon="clear" />
            <ScriptButton type="button"><Glyph $width={12} $bold $color="#555">x</Glyph><Script>2</Script></ScriptButton>
            <ScriptButton type="button"><Glyph $width={12} $bold $color="#555">x</Glyph><Script $low>2</Script></ScriptButton>
          </Row>
          <Footer title="Schriftart" launcher inset={4} />
        </Group>

        <Group $width={172} $inset={7}>
          <Row $cols="45px 45px 30px 30px">
            <Menu icon="bullets" /><Menu icon="numbers" /><Tool icon="outdent" /><Tool icon="indent" />
          </Row>
          <Row $cols="30px 30px 30px 30px 45px">
            <Tool icon="left" /><Tool icon="center" /><Tool icon="right" /><Tool icon="justify" /><Menu icon="columns" />
          </Row>
          <Row $cols="43px 43px 43px">
            <Menu icon="lineSpacing" /><Menu icon="direction" /><Menu icon="textAlign" />
          </Row>
          <Footer title="Absatz" launcher inset={7} />
        </Group>

        <Group $width={140}>
          <Row $cols="45px 43px 43px">
            <Menu icon="shapes" on /><Menu icon="star" on /><Menu icon="shapesOff" />
          </Row>
          <Row $cols="45px 43px 43px">
            <Menu icon="textBox" on /><Menu icon="omega" on /><Menu icon="merge" />
          </Row>
          <Row $cols="45px 43px 43px">
            <Menu icon="table" on /><Menu icon="agenda" on /><Menu icon="design" on />
          </Row>
          <Footer title="Formen" />
        </Group>

        <Group $width={186}>
          <Row $cols="45px 45px 43px 45px">
            <Menu icon="fill" /><Menu icon="fontFill" /><Menu icon="weights" /><Menu icon="transparency" />
          </Row>
          <Row $cols="45px 45px 43px 45px">
            <Menu icon="outline" /><Menu icon="fontOutline" /><Menu icon="dashes" /><Menu icon="frame" />
          </Row>
          <Row $cols="45px 45px 43px 45px">
            <Menu icon="bevel" /><Menu icon="glow" /><Menu icon="arrows" /><Menu icon="style" on />
          </Row>
          <Footer title="Stile" launcher />
        </Group>

        <Group $width={149}>
          <Row $cols="27px 111px"><Tool icon="height" /><Spinner label="Höhe" value="1.03  cm" /></Row>
          <Row $cols="27px 111px"><Tool icon="width" /><Spinner label="Breite" value="11.85  cm" /></Row>
          <Row $cols="138px">
            <CheckLabel><input type="checkbox" />Seitenverhält.</CheckLabel>
          </Row>
          <Footer title="Größe" launcher />
        </Group>

        <Group $width={232}>
          <Row $cols="48px 28px 29px 43px 30px 40px" $indent={1}>
            <Menu icon="sameHeight" /><Tool icon="alignLeft" /><Tool icon="alignTop" />
            <Tool icon="middle" /><Tool icon="group" /><Menu icon="forward" />
          </Row>
          <Row $cols="48px 28px 29px 43px 30px 40px" $indent={1}>
            <Menu icon="sameWidth" /><Tool icon="alignRight" /><Tool icon="alignBottom" />
            <Tool icon="centre" /><Tool icon="ungroup" /><Menu icon="backward" />
          </Row>
          <Row $cols="48px 28px 29px 43px 30px 40px" $indent={1}>
            <Menu icon="swap" /><Tool icon="centerH" /><Tool icon="centerV" />
            <Menu icon="design" on /><Tool icon="regroup" /><Menu icon="grid" />
          </Row>
          <Footer title="Anordnen" />
        </Group>

        <Group $width={136}>
          <Row $cols="43px 50px 16px 16px"><Menu icon="gapV" /><Steps label="Abstand vertikal" /></Row>
          <Row $cols="43px 50px 16px 16px"><Menu icon="gapH" /><Steps label="Abstand horizontal" /></Row>
          <Row $cols="43px 50px 16px 16px"><Menu icon="rotate" /><Steps label="Rotation" /></Row>
          <Footer title="Abstand/Rotation" />
        </Group>

        <Group $width={211}>
          <Row $cols="28px 39px 16px 16px 44px" $indent={47}>
            <Tool icon="insetTop" /><Steps label="Oben" /><Preset type="button">=0</Preset>
          </Row>
          <Row $cols="28px 39px 16px 18px 28px 39px 16px 16px">
            <Tool icon="insetLeft" /><Steps label="Links" /><Tool icon="insetRight" /><Steps label="Rechts" />
          </Row>
          <Row $cols="28px 39px 16px 16px 44px" $indent={47}>
            <Tool icon="insetBottom" /><Steps label="Unten" /><Preset type="button">==</Preset>
          </Row>
          <Footer title="Textfeld Innenabstand" launcher />
        </Group>

        <Group $width={60}>
          <Row $cols="24px"><Tool icon="dot" /></Row>
          <Row $cols="24px"><Tool icon="paraTop" /></Row>
          <Row $cols="24px"><Tool icon="paraBottom" /></Row>
        </Group>
      </Ribbon>

      <Workspace>
        <Sidebar>
          <SlideList>
            <SlideItem>
              <SlideNumber $active>1</SlideNumber>
              <Thumb $active>
                {TEXTS.map((parts, i) => (
                  <p key={i}>{parts.map(([t]) => t).join("")}</p>
                ))}
                <Pointer width="14" height="21" viewBox="0 0 14 21" aria-hidden="true">
                  <path d="M.5 1v16.500l4-3.800 2.500 5.800 2.500-1-2.500-5.800h5z" fill="#fff" stroke="#1c1c28" />
                </Pointer>
              </Thumb>
            </SlideItem>
            <SlideItem>
              <SlideNumber $animated>2</SlideNumber>
              <Thumb />
            </SlideItem>
            <SlideItem>
              <SlideNumber>3</SlideNumber>
              <Thumb />
            </SlideItem>
          </SlideList>
        </Sidebar>

        <Pane>
          <RulerH>
            {pairs(16, 10).map(([a, b], i) => (
              <Span key={i}>
                <Minor /><Major /><Minor /><Mark n={a} />
                <Minor /><Major /><Minor /><Mark n={b} />
              </Span>
            ))}
          </RulerH>
          <RulerV>
            {pairs(9, 9).map(([a, b], i) => (
              <Span key={i} $vertical>
                <Major v /><Minor v /><Mark v n={a} /><Minor v />
                <Major v /><Minor v /><Mark v n={b} /><Minor v />
              </Span>
            ))}
          </RulerV>
          <Slide>
            {TEXTS.map((parts, i) => (
              <p key={i}>
                {parts.map(([t, wrong], j) =>
                  wrong ? <Misspelled key={j}>{t}</Misspelled> : <React.Fragment key={j}>{t}</React.Fragment>
                )}
              </p>
            ))}
          </Slide>
        </Pane>
      </Workspace>
    </Frame>
  );
}
